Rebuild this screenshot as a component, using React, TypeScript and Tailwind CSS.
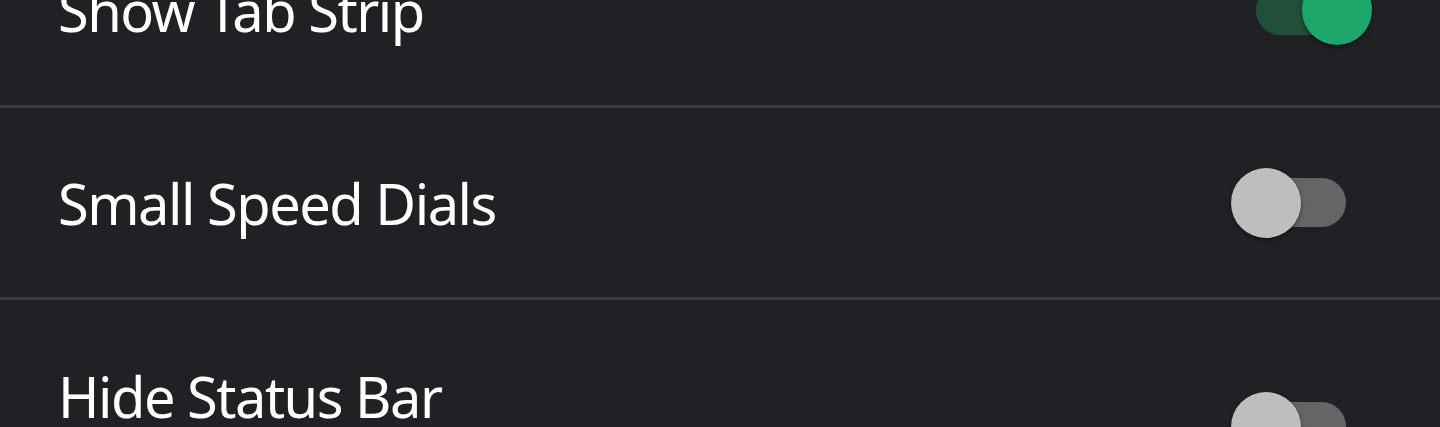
import React from "react";

interface SettingRow {
  label: string;
  enabled: boolean;
}

const rows: SettingRow[] = [
  { label: "Show Tab Strip", enabled: true },
  { label: "Small Speed Dials", enabled: false },
];

const Toggle = ({ on }: { on: boolean }) => (
  <div
    className={`relative w-[90px] h-[49px] rounded-full ${
      on ? "bg-[#20503a]" : "bg-[#646567]"
    }`}
  >
    <div
      className={`absolute top-[-10.5px] w-[70px] h-[70px] rounded-full shadow-[0_2px_4px_rgba(0,0,0,0.45)] ${
        on ? "right-[-26px] bg-[#1fa66a]" : "left-[-25px] bg-[#bebebe]"
      }`}
    />
  </div>
);

const App = () => {
  return (
    <div
      className="w-[1440px] h-[427px] overflow-hidden bg-[#202125] text-white"
      style={{ fontFamily: '"Noto Sans", "Open Sans", sans-serif' }}
    >
      <div className="-mt-[85px]">
        {rows.map((r, i) => (
          <div key={r.label}>
            <div
              className={`flex items-center justify-between pl-[58px] pr-[94px] ${
                i === 0 ? "h-[190px]" : "h-[189px]"
              }`}
            >
              <span className="text-[56px] leading-none tracking-[-1.5px]">
                {r.label}
              </span>
              <Toggle on={r.enabled} />
            </div>
            <div className="h-[3px] bg-[#3c3d41]" />
          </div>
        ))}

        {/* last row: taller, toggle sits lower than the title */}
        <div className="flex justify-between pl-[58px] pr-[94px] h-[200px]">
          <span className="text-[56px] leading-none tracking-[-1.5px] pt-[68px]">
            Hide Status Bar
          </span>
          <div className="pt-[102px]">
            <Toggle on={false} />
          </div>
        </div>
      </div>
    </div>
  );
};

export default App;
